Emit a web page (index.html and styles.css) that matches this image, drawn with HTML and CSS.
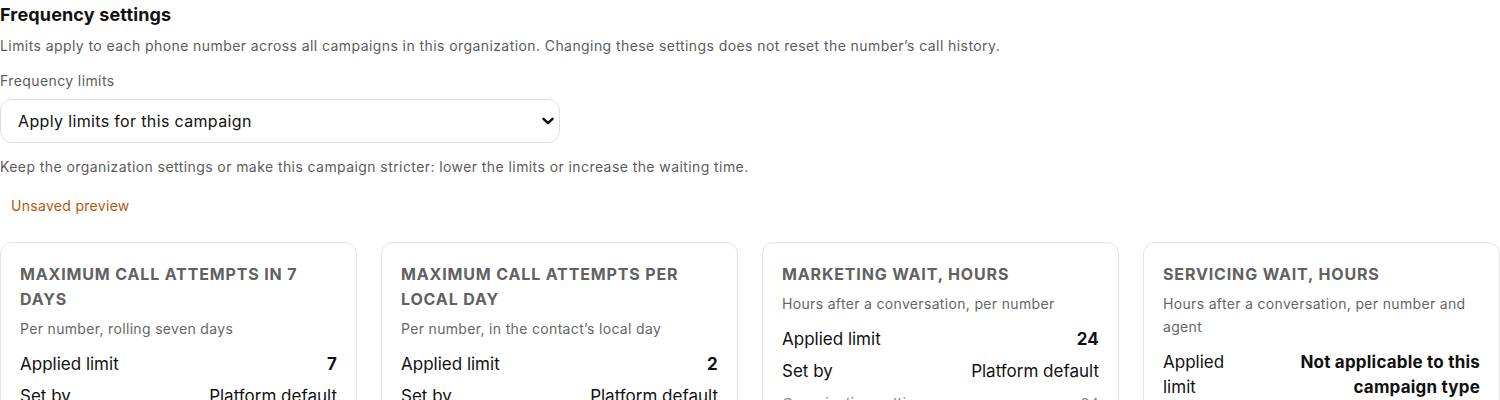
FILE: index.html
```html
<!DOCTYPE html>
<html lang="en">
<head>
    <meta charset="UTF-8">
    <meta name="viewport" content="width=device-width, initial-scale=1.0">
    <title>Frequency settings</title>
    <link rel="stylesheet" href="styles.css">
</head>
<body>
    <section class="settings">
        <h2>Frequency settings</h2>
        <p class="muted">Limits apply to each phone number across all campaigns in this organization. Changing these settings does not reset the number’s call history.</p>

        <label class="field-label" for="freq-mode">Frequency limits</label>
        <div class="select-wrap">
            <select id="freq-mode">
                <option>Apply limits for this campaign</option>
                <option>Use organization settings</option>
            </select>
            <svg class="chevron" width="14" height="14" viewBox="0 0 14 14" aria-hidden="true">
                <path d="M2.5 4.8 L7 9.2 L11.5 4.8" fill="none" stroke="#111" stroke-width="2.4" stroke-linecap="round" stroke-linejoin="round"/>
            </svg>
        </div>
        <p class="muted hint">Keep the organization settings or make this campaign stricter: lower the limits or increase the waiting time.</p>

        <div class="badge">Unsaved preview</div>

        <!-- Limit cards -->
        <div class="cards">
            <div class="card">
                <h3>Maximum call attempts in 7 days</h3>
                <p class="card-sub">Per number, rolling seven days</p>
                <div class="row"><span>Applied limit</span><strong>7</strong></div>
                <div class="row"><span>Set by</span><span>Platform default</span></div>
                <div class="row faint"><span>Organization setting</span><span>7</span></div>
            </div>
            <div class="card">
                <h3>Maximum call attempts per local day</h3>
                <p class="card-sub">Per number, in the contact’s local day</p>
                <div class="row"><span>Applied limit</span><strong>2</strong></div>
                <div class="row"><span>Set by</span><span>Platform default</span></div>
                <div class="row faint"><span>Organization setting</span><span>2</span></div>
            </div>
            <div class="card">
                <h3>Marketing wait, hours</h3>
                <p class="card-sub">Hours after a conversation, per number</p>
                <div class="row"><span>Applied limit</span><strong>24</strong></div>
                <div class="row"><span>Set by</span><span>Platform default</span></div>
                <div class="row faint"><span>Organization setting</span><span>24</span></div>
            </div>
            <div class="card">
                <h3>Servicing wait, hours</h3>
                <p class="card-sub">Hours after a conversation, per number and agent</p>
                <div class="row"><span>Applied limit</span><strong>Not applicable to this campaign type</strong></div>
                <div class="row"><span>Set by</span><span>Platform default</span></div>
            </div>
        </div>
    </section>
</body>
</html>
```

FILE: styles.css
```css
/* Global Styles */
body {
    font-family: Inter, "Noto Sans", sans-serif;
    margin: 0;
    padding: 0;
    background: #fff;
    color: #111;
}
.settings {
    width: 1500px;
}
h2 {
    font-size: 18px;
    font-weight: 700;
    margin: 3px 0 0;
    line-height: 24px;
    letter-spacing: 0.15px;
}
.muted {
    color: #5c5c5c;
    font-size: 14px;
    line-height: 20px;
    letter-spacing: 0.42px;
    margin: 9px 0 0;
}
.field-label {
    display: block;
    color: #5c5c5c;
    font-size: 14px;
    line-height: 20px;
    letter-spacing: 0.4px;
    margin-top: 15px;
}
.select-wrap {
    position: relative;
    width: 560px;
    margin-top: 8px;
}
.select-wrap select {
    appearance: none;
    -webkit-appearance: none;
    width: 100%;
    height: 44px;
    padding: 0 40px 0 17px;
    border: 1px solid #dedede;
    border-radius: 12px;
    background: #fff;
    font-family: inherit;
    font-size: 16px;
    letter-spacing: 0.35px;
    color: #111;
}
.chevron {
    position: absolute;
    right: 5px;
    top: 15px;
}
.hint {
    margin-top: 14px;
}
.badge {
    display: inline-block;
    color: #b4570b;
    font-size: 14px;
    line-height: 20px;
    letter-spacing: 0.3px;
    padding: 0 11px;
    margin-top: 19px;
}
.cards {
    display: grid;
    grid-template-columns: repeat(4, 1fr);
    gap: 24px;
    margin-top: 26px;
}
.card {
    border: 1px solid #e4e4e4;
    border-radius: 12px;
    padding: 19px 19px 20px;
    min-height: 220px;
}
.card h3 {
    margin: 0;
    font-size: 16px;
    font-weight: 700;
    text-transform: uppercase;
    letter-spacing: 0.85px;
    line-height: 25px;
    color: #616161;
}
.card-sub {
    margin: 5px 0 9px;
    color: #666;
    font-size: 14px;
    line-height: 23px;
    letter-spacing: 0.33px;
}
.row {
    display: flex;
    justify-content: space-between;
    gap: 24px;
    font-size: 17px;
    line-height: 25px;
    padding: 3px 0 4px;
}
.row strong {
    text-align: right;
    letter-spacing: 0.2px;
}
.row.faint {
    color: #888;
    font-size: 15px;
}
```
